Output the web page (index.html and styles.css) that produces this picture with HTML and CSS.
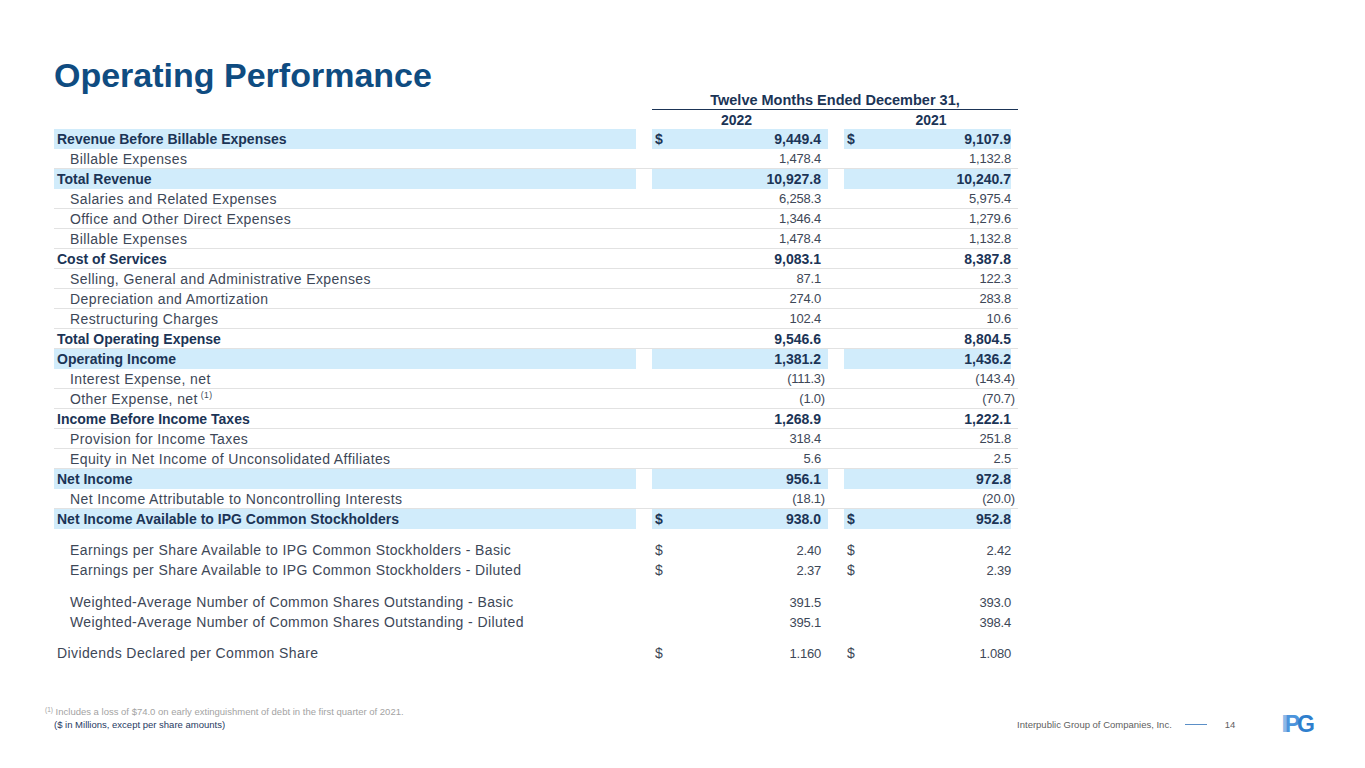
FILE: index.html
```html
<!DOCTYPE html>
<html lang="en">
<head>
<meta charset="utf-8">
<title>Operating Performance</title>
<link rel="stylesheet" href="styles.css">
</head>
<body>
<div class="slide">
  <h1 class="title">Operating Performance</h1>

  <div class="table">
    <div class="row head">
      <div class="span-cols period">Twelve Months Ended December 31,</div>
    </div>
    <div class="row head years">
      <div class="c1 year">2022</div>
      <div class="c2w year">2021</div>
    </div>

    <div class="row hl bold">
      <div class="lab">Revenue Before Billable Expenses</div>
      <div class="num c1"><span class="cur">$</span><span>9,449.4</span></div>
      <div class="num c2"><span class="cur">$</span><span>9,107.9</span></div>
    </div>
    <div class="row line">
      <div class="lab ind">Billable Expenses</div>
      <div class="num c1"><span></span><span>1,478.4</span></div>
      <div class="num c2"><span></span><span>1,132.8</span></div>
    </div>
    <div class="row hl bold">
      <div class="lab">Total Revenue</div>
      <div class="num c1"><span></span><span>10,927.8</span></div>
      <div class="num c2"><span></span><span>10,240.7</span></div>
    </div>
    <div class="row line">
      <div class="lab ind">Salaries and Related Expenses</div>
      <div class="num c1"><span></span><span>6,258.3</span></div>
      <div class="num c2"><span></span><span>5,975.4</span></div>
    </div>
    <div class="row line">
      <div class="lab ind">Office and Other Direct Expenses</div>
      <div class="num c1"><span></span><span>1,346.4</span></div>
      <div class="num c2"><span></span><span>1,279.6</span></div>
    </div>
    <div class="row line">
      <div class="lab ind">Billable Expenses</div>
      <div class="num c1"><span></span><span>1,478.4</span></div>
      <div class="num c2"><span></span><span>1,132.8</span></div>
    </div>
    <div class="row line bold">
      <div class="lab">Cost of Services</div>
      <div class="num c1"><span></span><span>9,083.1</span></div>
      <div class="num c2"><span></span><span>8,387.8</span></div>
    </div>
    <div class="row line">
      <div class="lab ind">Selling, General and Administrative Expenses</div>
      <div class="num c1"><span></span><span>87.1</span></div>
      <div class="num c2"><span></span><span>122.3</span></div>
    </div>
    <div class="row line">
      <div class="lab ind">Depreciation and Amortization</div>
      <div class="num c1"><span></span><span>274.0</span></div>
      <div class="num c2"><span></span><span>283.8</span></div>
    </div>
    <div class="row line">
      <div class="lab ind">Restructuring Charges</div>
      <div class="num c1"><span></span><span>102.4</span></div>
      <div class="num c2"><span></span><span>10.6</span></div>
    </div>
    <div class="row line bold">
      <div class="lab">Total Operating Expense</div>
      <div class="num c1"><span></span><span>9,546.6</span></div>
      <div class="num c2"><span></span><span>8,804.5</span></div>
    </div>
    <div class="row hl bold">
      <div class="lab">Operating Income</div>
      <div class="num c1"><span></span><span>1,381.2</span></div>
      <div class="num c2"><span></span><span>1,436.2</span></div>
    </div>
    <div class="row line">
      <div class="lab ind">Interest Expense, net</div>
      <div class="num c1"><span></span><span class="neg">(111.3)</span></div>
      <div class="num c2"><span></span><span class="neg">(143.4)</span></div>
    </div>
    <div class="row line">
      <div class="lab ind">Other Expense, net <sup class="sup">(1)</sup></div>
      <div class="num c1"><span></span><span class="neg">(1.0)</span></div>
      <div class="num c2"><span></span><span class="neg">(70.7)</span></div>
    </div>
    <div class="row line bold">
      <div class="lab">Income Before Income Taxes</div>
      <div class="num c1"><span></span><span>1,268.9</span></div>
      <div class="num c2"><span></span><span>1,222.1</span></div>
    </div>
    <div class="row line">
      <div class="lab ind">Provision for Income Taxes</div>
      <div class="num c1"><span></span><span>318.4</span></div>
      <div class="num c2"><span></span><span>251.8</span></div>
    </div>
    <div class="row line">
      <div class="lab ind">Equity in Net Income of Unconsolidated Affiliates</div>
      <div class="num c1"><span></span><span>5.6</span></div>
      <div class="num c2"><span></span><span>2.5</span></div>
    </div>
    <div class="row hl bold">
      <div class="lab">Net Income</div>
      <div class="num c1"><span></span><span>956.1</span></div>
      <div class="num c2"><span></span><span>972.8</span></div>
    </div>
    <div class="row line">
      <div class="lab ind">Net Income Attributable to Noncontrolling Interests</div>
      <div class="num c1"><span></span><span class="neg">(18.1)</span></div>
      <div class="num c2"><span></span><span class="neg">(20.0)</span></div>
    </div>
    <div class="row hl bold">
      <div class="lab">Net Income Available to IPG Common Stockholders</div>
      <div class="num c1"><span class="cur">$</span><span>938.0</span></div>
      <div class="num c2"><span class="cur">$</span><span>952.8</span></div>
    </div>

    <div class="group">
      <div class="row plain">
        <div class="lab ind">Earnings per Share Available to IPG Common Stockholders - Basic</div>
        <div class="num c1"><span class="cur">$</span><span>2.40</span></div>
        <div class="num c2"><span class="cur">$</span><span>2.42</span></div>
      </div>
      <div class="row plain">
        <div class="lab ind">Earnings per Share Available to IPG Common Stockholders - Diluted</div>
        <div class="num c1"><span class="cur">$</span><span>2.37</span></div>
        <div class="num c2"><span class="cur">$</span><span>2.39</span></div>
      </div>
    </div>
    <div class="group">
      <div class="row plain">
        <div class="lab ind">Weighted-Average Number of Common Shares Outstanding - Basic</div>
        <div class="num c1"><span></span><span>391.5</span></div>
        <div class="num c2"><span></span><span>393.0</span></div>
      </div>
      <div class="row plain">
        <div class="lab ind">Weighted-Average Number of Common Shares Outstanding - Diluted</div>
        <div class="num c1"><span></span><span>395.1</span></div>
        <div class="num c2"><span></span><span>398.4</span></div>
      </div>
    </div>
    <div class="group">
      <div class="row plain">
        <div class="lab">Dividends Declared per Common Share</div>
        <div class="num c1"><span class="cur">$</span><span>1.160</span></div>
        <div class="num c2"><span class="cur">$</span><span>1.080</span></div>
      </div>
    </div>
  </div>

  <footer class="footer">
    <div class="notes">
      <div class="note"><sup class="fsup">(1)</sup> Includes a loss of $74.0 on early extinguishment of debt in the first quarter of 2021.</div>
      <div class="units">($ in Millions, except per share amounts)</div>
    </div>
    <div class="brand">
      <span class="company">Interpublic Group of Companies, Inc.</span>
      <span class="rule"></span>
      <span class="page">14</span>
      <span class="logo"><span class="li">I</span><span class="lp">P</span><span class="lg">G</span></span>
    </div>
  </footer>
</div>
</body>
</html>
```

FILE: styles.css
```css
* { box-sizing: border-box; }
html, body { margin: 0; padding: 0; background: #ffffff; }
body { font-family: "Liberation Sans", Arial, sans-serif; }

.slide {
  width: 1365px;
  height: 768px;
  padding: 60px 0 0 54px;
  display: flex;
  flex-direction: column;
  overflow: hidden;
}

.title {
  margin: 0;
  font-size: 34px;
  line-height: 30px;
  height: 30px;
  font-weight: 700;
  color: #0f4c81;
}

.table { width: 964px; }

.row {
  display: grid;
  grid-template-columns: 582px 16px 176px 16px 167px 7px;
  height: 20px;
  align-items: stretch;
}
.row.line { border-bottom: 1px solid #e2e2e2; }

.lab {
  grid-column: 1;
  display: flex;
  align-items: center;
  padding-left: 3px;
  font-size: 14px;
  white-space: nowrap;
  color: #1b3456;
}
.lab.ind { padding-left: 16px; }

.row:not(.bold) .lab {
  color: #3d4757;
  letter-spacing: 0.4px;
}
.bold .lab { font-weight: 700; }

.num {
  display: flex;
  align-items: center;
  justify-content: space-between;
  padding-left: 3px;
  font-size: 13px;
  letter-spacing: -0.2px;
  color: #3d4757;
  white-space: nowrap;
}
.c1 { grid-column: 3; padding-right: 7px; }
.c2 { grid-column: 5; padding-right: 0; }
.bold .num { font-weight: 700; font-size: 14px; letter-spacing: 0; color: #1b3456; }
.cur { font-size: 14px; letter-spacing: 0; }
.neg { margin-right: -4px; }

.hl .lab, .hl .num { background: #d1ecfb; }

.sup {
  font-size: 8.5px;
  line-height: 0;
  position: relative;
  top: -4px;
  margin-left: 3px;
  vertical-align: baseline;
}

.head { height: 20px; }
.span-cols {
  grid-column: 3 / 7;
  border-bottom: 1px solid #1b3456;
  display: flex;
  align-items: center;
  justify-content: center;
  font-size: 14.5px;
  font-weight: 700;
  color: #1b3456;
}
.years { height: 19px; }
.year {
  display: flex;
  align-items: center;
  justify-content: center;
  font-size: 14px;
  font-weight: 700;
  color: #1b3456;
}
.c2w { grid-column: 5 / 7; }

.group { padding-top: 11px; }
.group + .group { padding-top: 12px; }
.group:last-child { padding-top: 11px; }

.footer {
  margin-top: auto;
  margin-left: -9px;
  padding-bottom: 37px;
  display: flex;
  justify-content: space-between;
  align-items: flex-end;
  width: 1267px;
}
.notes { font-size: 9.5px; line-height: 13px; }
.note { color: #a3a3a3; }
.fsup { font-size: 6.5px; line-height: 0; position: relative; top: -3px; vertical-align: baseline; }
.units { color: #1f3a5f; padding-left: 9px; }

.brand {
  display: flex;
  align-items: center;
  height: 17px;
  margin-bottom: -2px;
  font-size: 9.5px;
  color: #606060;
}
.company { margin-right: 13px; }
.rule { width: 22px; height: 1px; background: #5b8fc7; margin-right: 18px; }
.page { margin-right: 46px; }
.logo {
  font-size: 23px;
  font-weight: 900;
  font-family: "Liberation Sans", Arial, sans-serif;
  letter-spacing: -3px;
  line-height: 17px;
}
.li { color: #8dbbe8; }
.lp { color: #4c94dc; }
.lg { color: #2f7fcd; }
```
